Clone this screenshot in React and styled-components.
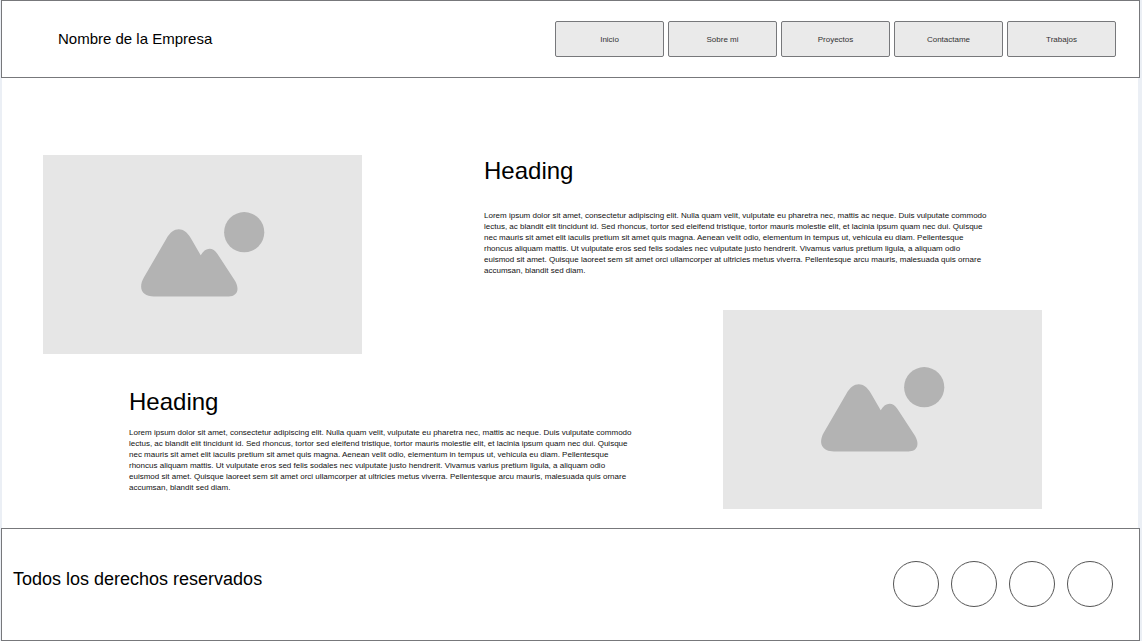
import React from "react";
import styled, { createGlobalStyle } from "styled-components";

const GlobalStyle = createGlobalStyle`
  * { box-sizing: border-box; }
  body {
    margin: 0;
    background: #ebeff5;
    color: #000;
    font-family: "Liberation Sans", Arial, sans-serif;
  }
`;

const Page = styled.div`
  min-height: 100vh;
  padding: 0 2px 0 1px;
  display: flex;
  flex-direction: column;
`;

const Bar = styled.div`
  display: flex;
  align-items: center;
  justify-content: space-between;
  border: 1px solid #77787b;
  background: #fff;
`;

const Header = styled(Bar).attrs({ as: "header" })`
  min-height: 78px;
  padding: 0 23px 0 56px;
`;

const Footer = styled(Bar).attrs({ as: "footer" })`
  min-height: 113px;
  padding: 0 26px 2px 11px;
`;

const Brand = styled.h1`
  margin: 0;
  font-size: 15px;
  line-height: 20px;
  font-weight: 400;
`;

const Nav = styled.nav`
  display: flex;
  gap: 4px;
`;

const NavButton = styled.button`
  width: 109px;
  height: 36px;
  padding: 0;
  border: 1px solid #77787b;
  border-radius: 2px;
  background: #eaeaea;
  color: #333;
  font-family: inherit;
  font-size: 8px;
  line-height: 11px;
`;

const Main = styled.main`
  flex: 1;
  margin: 0 2px 0 1px;
  padding: 77px 95px 19px 41px;
  background: #fff;
  display: grid;
  grid-template-columns: 86fr 355fr 239fr 320fr;
  grid-template-rows: minmax(155px, auto) 44px minmax(155px, auto);
  align-content: start;
`;

const Picture = styled.svg`
  display: block;
  width: 319px;
  height: 199px;
  grid-column: ${(p) => p.$column};
  grid-row: ${(p) => p.$row};
`;

const Article = styled.article`
  max-width: 508px;
  grid-column: ${(p) => p.$column};
  grid-row: ${(p) => p.$row};
  display: flex;
  flex-direction: column;
  gap: ${(p) => p.$gap};
  padding-top: ${(p) => p.$top};
`;

const Title = styled.h2`
  margin: 0;
  font-size: 24px;
  line-height: 28px;
  font-weight: 400;
`;

const Text = styled.p`
  margin: 0;
  color: #111;
  font-size: 8px;
  line-height: 11px;
`;

const Rights = styled.p`
  margin: 0;
  padding-bottom: 10px;
  font-size: 18px;
  line-height: 20px;
`;

const Socials = styled.div`
  display: flex;
  gap: 12px;
`;

const SocialButton = styled.button`
  width: 46px;
  height: 46px;
  padding: 0;
  border: 1px solid #555;
  border-radius: 50%;
  background: #fff;
`;

const links = ["Inicio", "Sobre mi", "Proyectos", "Contactame", "Trabajos"];
const socials = ["Red social 1", "Red social 2", "Red social 3", "Red social 4"];

const lorem =
  "Lorem ipsum dolor sit amet, consectetur adipiscing elit. Nulla quam velit, vulputate eu pharetra nec, mattis ac neque. Duis vulputate commodo lectus, ac blandit elit tincidunt id. Sed rhoncus, tortor sed eleifend tristique, tortor mauris molestie elit, et lacinia ipsum quam nec dui. Quisque nec mauris sit amet elit iaculis pretium sit amet quis magna. Aenean velit odio, elementum in tempus ut, vehicula eu diam. Pellentesque rhoncus aliquam mattis. Ut vulputate eros sed felis sodales nec vulputate justo hendrerit. Vivamus varius pretium ligula, a aliquam odio euismod sit amet. Quisque laoreet sem sit amet orci ullamcorper at ultricies metus viverra. Pellentesque arcu mauris, malesuada quis ornare accumsan, blandit sed diam.";

function Placeholder({ column, row }) {
  return (
    <Picture $column={column} $row={row} viewBox="0 0 319 199" aria-hidden="true">
      <rect width="319" height="199" fill="#e6e6e6" />
      <g fill="#b3b3b3">
        <circle cx="201.200" cy="77.200" r="20.100" />
        <path d="M123.500 83.500C130.500 71.300 141 71.300 148 83.500L157.700 100.300C162.500 92 169.800 91.800 174.500 99L191 124.300C197.500 134 194.500 141.500 185.500 141.500H111C99.500 141.500 94.500 133.500 101 122.300Z" />
      </g>
    </Picture>
  );
}

export default function App() {
  return (
    <>
      <GlobalStyle />
      <Page>
        <Header>
          <Brand>Nombre de la Empresa</Brand>
          <Nav>
            {links.map((label) => (
              <NavButton key={label} type="button">{label}</NavButton>
            ))}
          </Nav>
        </Header>
        <Main>
          <Placeholder column="1 / 3" row="1 / 3" />
          <Article $column="3 / 5" $row="1 / 2" $gap="25px" $top="2px">
            <Title>Heading</Title>
            <Text>{lorem}</Text>
          </Article>
          <Placeholder column="4 / 5" row="2 / 4" />
          <Article $column="2 / 4" $row="3 / 4" $gap="11px" $top="34px">
            <Title>Heading</Title>
            <Text>{lorem}</Text>
          </Article>
        </Main>
        <Footer>
          <Rights>Todos los derechos reservados</Rights>
          <Socials>
            {socials.map((label) => (
              <SocialButton key={label} type="button" aria-label={label} />
            ))}
          </Socials>
        </Footer>
      </Page>
    </>
  );
}
